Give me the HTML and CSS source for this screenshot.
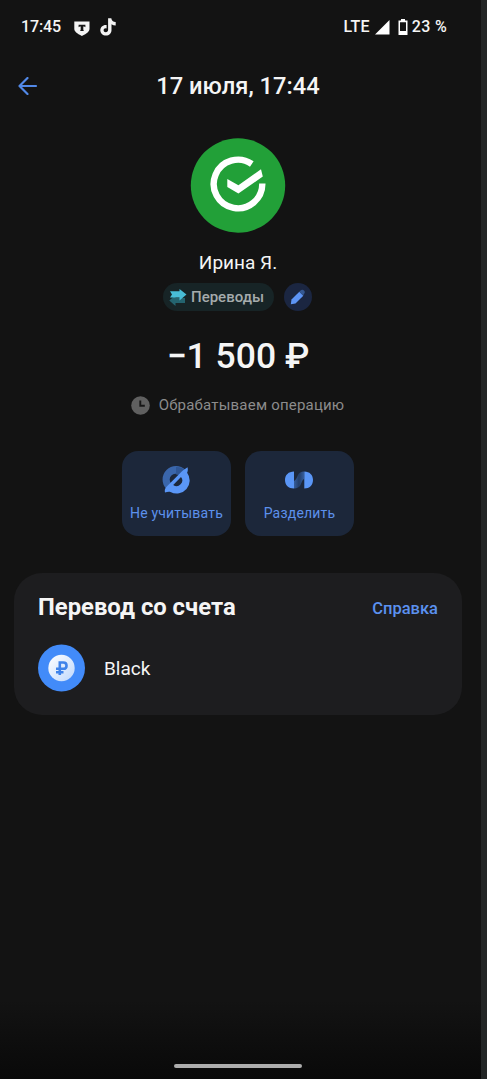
FILE: index.html
```html
<!DOCTYPE html>
<html lang="ru">
<head>
<meta charset="utf-8">
<title>Операция</title>
<link rel="stylesheet" href="styles.css">
</head>
<body>
<div class="screen">
  <div class="statusbar">
    <span class="time">17:45</span>
    <svg class="shield" width="16" height="15" viewBox="0 0 16 15"><path fill="#f4f4f4" d="M.3.4h15.2v7.2c0 3.200-2.500 5-7.600 7.300C2.800 12.600.3 10.800.3 7.600z"/><path fill="#151515" d="M4.600 3.800h6.800v2.500c-.5-.5-1-.7-2.100-.7v3c0 .7.200 1 .7 1.300H6c.5-.3.7-.6.7-1.300v-3c-1.100 0-1.600.2-2.100.7z"/></svg>
    <svg class="note" width="16" height="18" viewBox="0 0 16 18"><path fill="#f4f4f4" d="M8.100.2h3.200c.3 2.200 1.800 3.700 4.400 3.900v3.300c-1.600 0-3-.4-4.200-1.200v5.700c0 3.300-2.400 5.700-5.500 5.700C2.700 17.600.3 15.200.3 12.200c0-3.200 2.800-5.700 6.300-5.200v3.400c-1.700-.5-3 .5-3 1.900 0 1.200.9 2 2.100 2 1.500 0 2.400-1 2.400-2.500z"/></svg>
    <span class="spacer"></span>
    <span class="lte">LTE</span>
    <svg class="signal" width="15" height="15" viewBox="0 0 15 15"><path fill="#fff" d="M14.500 0v14.500H0z"/></svg>
    <svg class="battery" width="10" height="16" viewBox="0 0 10 16"><path fill="#fff" fill-rule="evenodd" d="M3 0h4v1.500h2.500V16H.5V1.500H3zM2 3.300v8.700h6V3.300z"/></svg>
    <span class="percent">23 %</span>
  </div>
  <header class="header">
    <svg class="back" width="20" height="18" viewBox="0 0 20 18"><path d="M9.500 1 1.500 9l8 8M1.500 9H18" fill="none" stroke="#5289e8" stroke-width="2.200" stroke-linecap="round" stroke-linejoin="round"/></svg>
    <h1 class="title">17 июля, 17:44</h1>
  </header>
  <main class="operation">
    <svg class="avatar" width="96" height="96" viewBox="0 0 96 96"><circle cx="48" cy="47.500" r="47.200" fill="#22a038"/><path d="M61.800 26A24.300 24.300 0 1 0 72.300 45.500" fill="none" stroke="#fff" stroke-width="6.400"/><path fill="#fff" d="M37.300 41 48.400 47.200 71 31.200l1.800 7.300L48.400 55.600 37.300 49z"/></svg>
    <div class="name">Ирина Я.</div>
    <div class="tags">
      <div class="tag">
        <svg width="18" height="17" viewBox="0 0 18 17"><path fill="#24646f" d="M6.500 6v3h9.500v5H6.500v3L.3 11.500z"/><path fill="#48bdd6" d="M1 2.300h9.500V0L17.500 5.500l-7 6V8.500H1L3 5.500z"/></svg>
        <span>Переводы</span>
      </div>
      <div class="edit"><svg width="16" height="16" viewBox="0 0 16 16"><path fill="#5d94f5" d="M.8 15.200 1.500 10.500 9.300 2.700l4 4L5.500 14.500z"/><path fill="#355892" d="m9.300 2.700 1.200-1.200c1.200-1.200 2.500-1 3.500 0s1.200 2.300 0 3.500l-.9 1.500z"/></svg></div>
    </div>
    <div class="amount">−1 500 ₽</div>
    <div class="state">
      <svg width="19" height="19" viewBox="0 0 19 19"><circle cx="9.500" cy="9.500" r="9.300" fill="#606060"/><path d="M9.300 4.500v5.300h4.500" fill="none" stroke="#171717" stroke-width="1.900"/></svg>
      <span>Обрабатываем операцию</span>
    </div>
    <div class="actions">
      <div class="action">
        <svg width="28" height="28" viewBox="0 0 28 28"><path fill="#3a66ab" d="M4.500 23A13 13 0 0 1 23.500 4L17.500 9.500A5.600 5.600 0 0 0 9.300 17.500z"/><path fill="#2f5694" d="M14 1a13 13 0 0 1 9.500 3.500l-6 5A5.500 5.500 0 0 0 14 8.500z"/><path fill="#5a96f6" d="M3 26.500c-.7-3 .2-4.500 2.500-6.800L19.500 5.800C22 3.400 23.500 3 25.500 1.300c.6 2.400.4 3.900-.4 5.500A13 13 0 0 1 8.500 26c-1.800-.7-3.500 0-5.500.5m8.200-7.600A5.600 5.600 0 0 0 19 11z"/></svg>
        <span>Не учитывать</span>
      </div>
      <div class="action">
        <svg width="28" height="28" viewBox="0 0 28 28"><defs><linearGradient id="link" x1="0" x2="1"><stop offset="0" stop-color="#355d9c"/><stop offset=".5" stop-color="#243e67"/><stop offset="1" stop-color="#355d9c"/></linearGradient></defs><path fill="url(#link)" d="M9 22.500V15c2-1 3-4 4-6s3-3.500 6-3.500V13c-2 1-2.500 4-3.500 6S12 22.500 9 22.500"/><path fill="#5a96f6" d="M9 5.500v17C3.500 22.500 0 19 0 14s3.500-8.500 9-8.500M19.300 5.500c5.300 0 8.700 3.500 8.700 8.500s-3.400 8.500-8.700 8.500z"/></svg>
        <span>Разделить</span>
      </div>
    </div>
  </main>
  <section class="card">
    <div class="card-head"><h2>Перевод со счета</h2><a class="help">Справка</a></div>
    <div class="account">
      <svg width="48" height="48" viewBox="0 0 48 48"><defs><linearGradient id="coin" x1="0" y1="0" x2="1" y2="1"><stop offset="0" stop-color="#fff"/><stop offset="1" stop-color="#bfd8fc"/></linearGradient></defs><circle cx="23.500" cy="24" r="23.500" fill="#428bf9"/><circle cx="23.500" cy="24" r="13.200" fill="url(#coin)"/><path d="M21.800 31V18.500h3.500c4.300 0 4.300 6.300 0 6.300H18M18 28.200h7.500" fill="none" stroke="#3f83ea" stroke-width="2.600"/></svg>
      <span>Black</span>
    </div>
  </section>
  <div class="home"></div>
</div>
</body>
</html>
```
FILE: styles.css
```css
* { box-sizing: border-box; }
body { margin: 0; background: #232626; font-family: Roboto, sans-serif; color: #f5f5f5; }
svg { display: block; flex: none; }
span, h1, h2, .name, .amount, .help { white-space: nowrap; }
.screen { width: 481px; height: 1079px; display: flex; flex-direction: column; background: linear-gradient(#131313 0 1000px, #090909 1079px); }
.statusbar { height: 54px; display: flex; align-items: center; padding: 0 34px 0 21px; font: 500 16px/20px Roboto, sans-serif; }
.time { width: 41px; letter-spacing: -.1px; }
.shield { margin-left: 12px; margin-top: 2px; }
.note { margin-left: 10px; }
.spacer { flex: 1; }
.lte { letter-spacing: .3px; }
.signal { margin-left: 5px; }
.battery { margin-left: 8px; }
.percent { margin-left: 4px; letter-spacing: .3px; }
.header { height: 64px; display: grid; grid-template-columns: 38px 1fr 38px; align-items: center; padding: 0 5px 0 0; }
.back { margin-left: 18px; }
.title { margin: 0; text-align: center; font: 500 23.7px/30px Roboto, sans-serif; }
.operation { width: 476px; display: flex; flex-direction: column; align-items: center; padding-top: 20px; }
.name { margin-top: 16px; font-size: 19px; line-height: 26px; }
.tags { display: flex; gap: 10px; margin: 7px 1px 0 0; }
.tag { width: 111px; height: 28px; border-radius: 14px; display: flex; align-items: center; gap: 4px; padding-left: 6px; background: #172426; color: #a5abac; font: 500 15px/20px Roboto, sans-serif; }
.edit { width: 28px; height: 28px; border-radius: 50%; background: #1b2641; display: grid; place-items: center; }
.amount { margin-top: 24px; font: 500 35.5px/42px Roboto, sans-serif; }
.state { display: flex; align-items: center; gap: 9px; margin: 18px 1px 0 0; height: 20px; color: #8c8c8c; font-size: 15px; letter-spacing: .2px; }
.actions { display: flex; gap: 14px; margin-top: 36px; }
.action { width: 109px; height: 85px; border-radius: 16px; background: #1c273a; color: #5c91ec; display: flex; flex-direction: column; align-items: center; padding-top: 15px; gap: 9px; font-size: 14px; line-height: 20px; letter-spacing: .2px; }
.action svg { margin-right: 1px; }
.card { width: 448px; height: 142px; margin: 37px 0 0 14px; padding: 19px 24px 0; border-radius: 28px; background: #1d1d1f; }
.card-head { display: flex; justify-content: space-between; align-items: center; height: 30px; }
.card-head h2 { margin: 0; font: 700 23.8px/30px Roboto, sans-serif; }
.help { padding-top: 4px; color: #5b91ef; font: 500 16.500px/20px Roboto, sans-serif; }
.account { display: flex; align-items: center; gap: 18px; margin-top: 22px; font-size: 19px; }
.home { width: 128px; height: 4px; border-radius: 2px; background: #adadad; margin: auto 0 11px 174px; }
```
